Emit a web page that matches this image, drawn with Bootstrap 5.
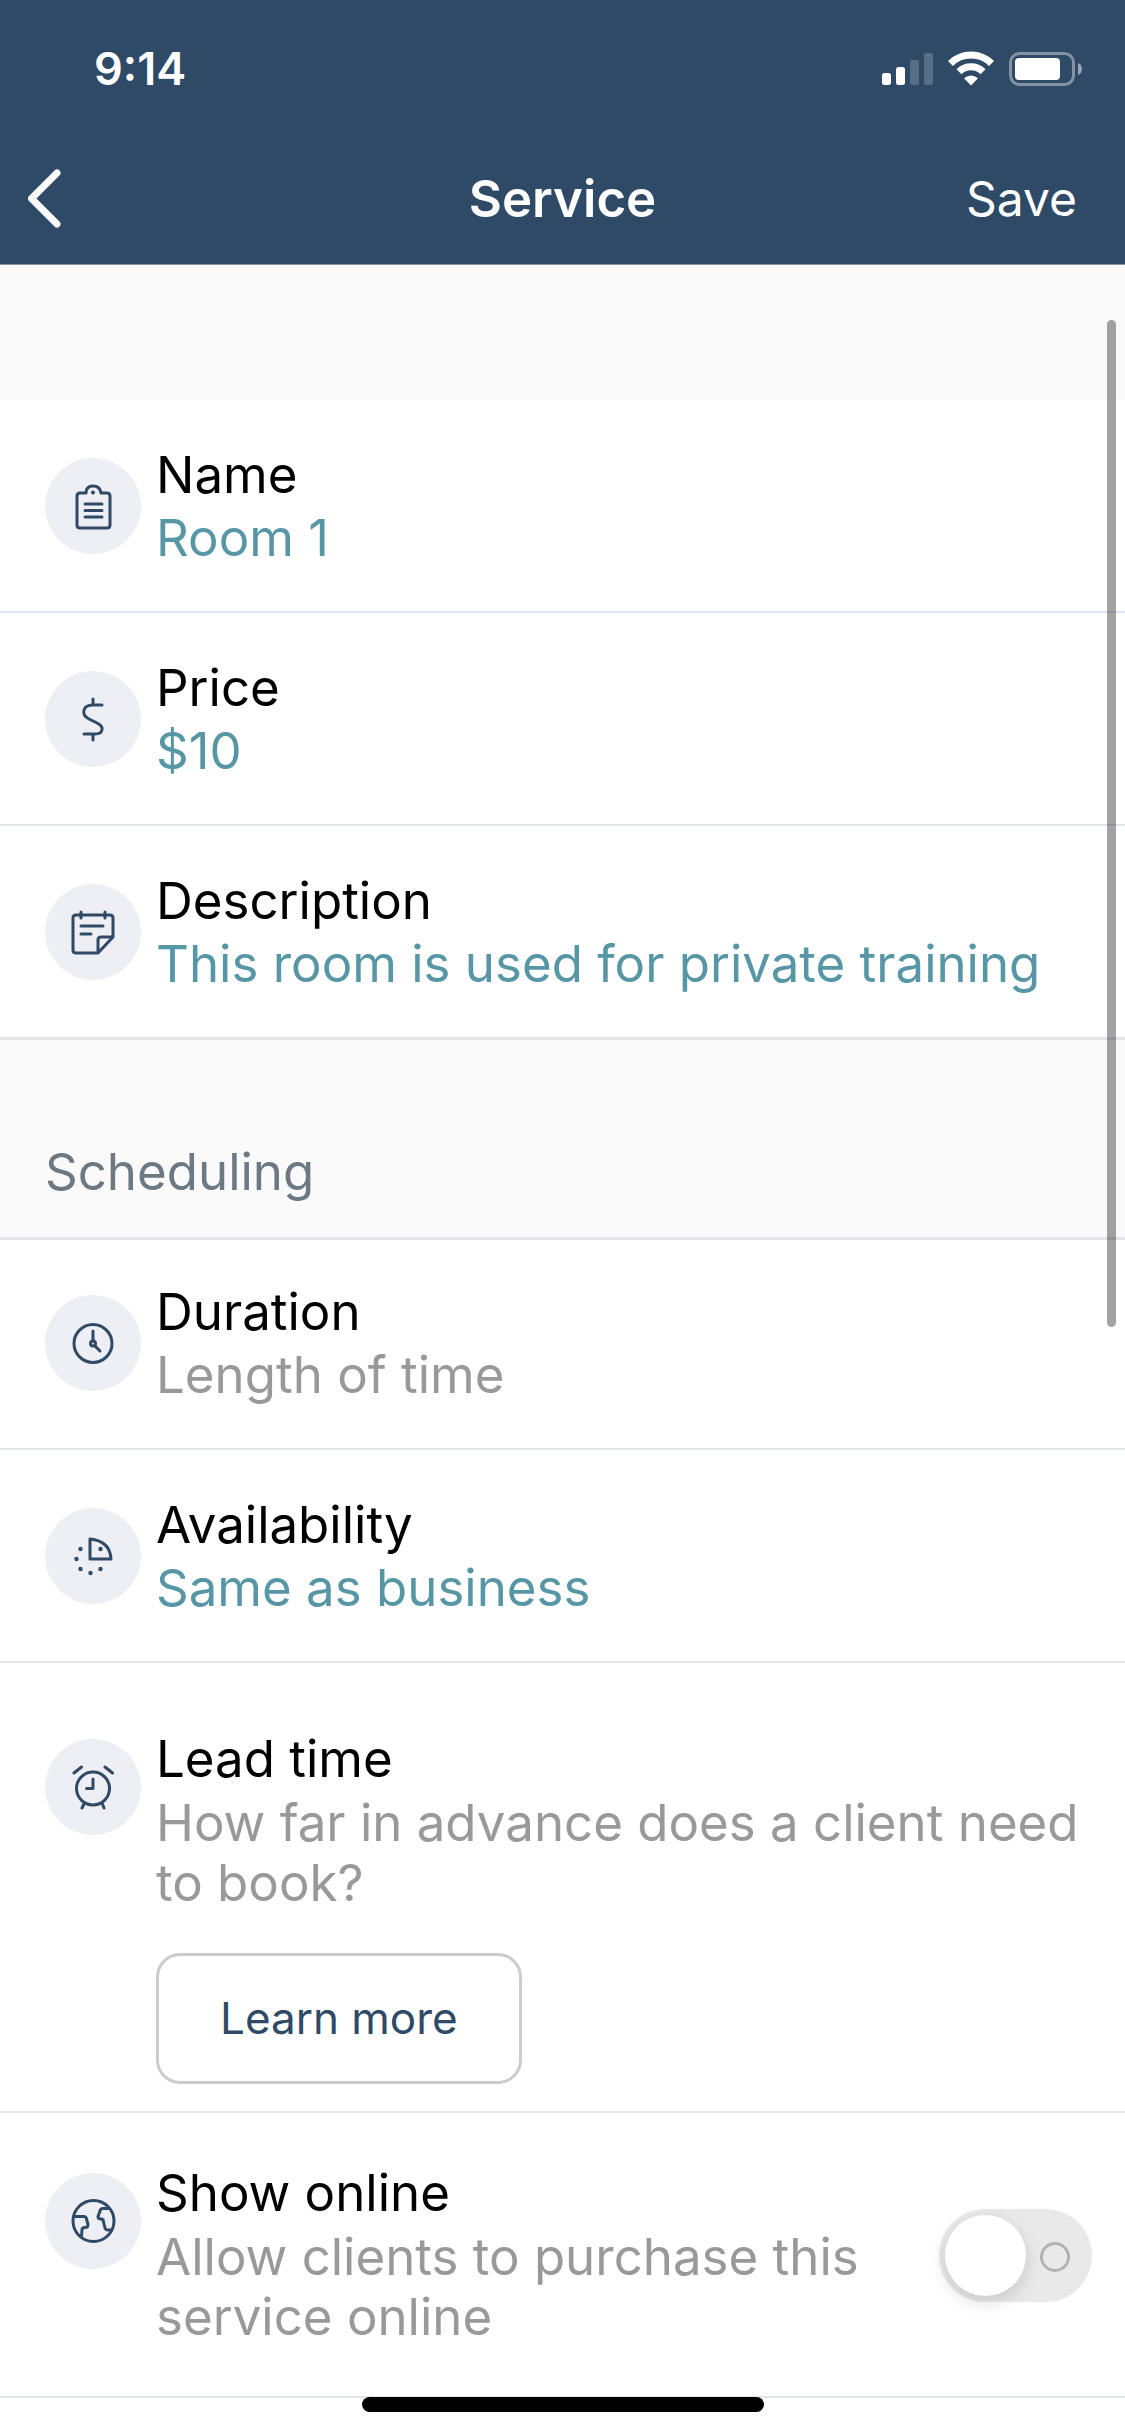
<!DOCTYPE html>
<html lang="en">
<head>
<meta charset="utf-8">
<meta name="viewport" content="width=device-width, initial-scale=1">
<title>Service</title>
<link href="https://cdn.jsdelivr.net/npm/bootstrap@5.3.0/dist/css/bootstrap.min.css" rel="stylesheet">
<script src="https://cdn.jsdelivr.net/npm/bootstrap@5.3.0/dist/js/bootstrap.bundle.min.js" defer></script>
<style>
  :root { --navy: #2e4a67; --teal: #5796a5; --line: #e0e6e9; --hint: #999; }
  body { font-family: Inter, "Liberation Sans", sans-serif; font-size: 51px; line-height: 60px; color: #000; background: #fff; }
  a { color: inherit; text-decoration: none; }
  .app-head { background: var(--navy); color: #fff; border-bottom: 1px solid #8d969f; }
  .status-bar { height: 138px; padding: 0 42px 0 94px; }
  .clock-text { font-size: 45px; font-weight: 600; }
  .title-bar { height: 126px; padding: 0 28px 4px; grid-template-columns: 1fr auto 1fr; }
  .title-text { font-size: 51px; font-weight: 600; line-height: 60px; }
  .save-btn { margin-right: 20px; font-size: 48px; line-height: 60px; }
  .spacer-band { height: 135px; background: #fafafa; }
  .setting { padding: 45px 45px 43px; border-bottom: 2px solid var(--line); gap: 15px; }
  .setting.flush { border-bottom: 0; }
  .setting.capped { box-shadow: inset 0 3px var(--line); }
  .setting.lead-row { padding: 66px 45px 27px; }
  .setting.online-row { padding: 50px 33px 49px 45px; }
  .disc { width: 96px; height: 96px; margin-top: 13px; border-radius: 50%; background: #eeeff4; }
  .disc svg { display: block; width: 96px; height: 96px; fill: none; stroke: var(--navy); stroke-width: 3; stroke-linecap: round; stroke-linejoin: round; }
  .lines { display: flex; flex-direction: column; gap: 3px; }
  .tall .disc { margin-top: 10px; }
  .tall .lines { gap: 4px; }
  .value { color: var(--teal); }
  .hint { color: var(--hint); }
  .group-head { min-height: 200px; padding: 0 45px 35px; color: #6c7983; background: #fafafa; border-top: 3px solid var(--line); font-size: 51px; line-height: 60px; font-weight: 400; }
  .learn-btn { margin-top: 36px; padding: 34px 61px; border: 3px solid #ccc; border-radius: 24px; color: var(--navy); font-size: 44px; line-height: 57px; }
  .toggle { position: relative; width: 153px; height: 93px; margin-top: 46px; }
  .form-check-input.toggle-box { display: block; width: 153px; height: 93px; margin: 0; border: 0; border-radius: 47px; background: #e9e9e9; }
  .toggle-knob { left: 6px; top: 6px; width: 81px; height: 81px; border-radius: 50%; background: #fff; box-shadow: 0 6px 18px rgba(0,0,0,.14); pointer-events: none; }
  .toggle-ring { right: 22px; top: 33px; width: 30px; height: 30px; border: 3px solid #b3b3b3; border-radius: 50%; pointer-events: none; }
  .scroll-thumb { top: 320px; right: 9px; width: 9px; height: 1007px; border-radius: 5px; background: rgba(0,0,0,.36); }
  .home-pill { bottom: 24px; width: 402px; height: 15px; border-radius: 8px; background: #000; }
</style>
</head>
<body class="position-relative min-vh-100 overflow-x-hidden">
<header class="app-head">
  <div class="status-bar d-flex align-items-center justify-content-between">
    <span class="clock-text">9:14</span>
    <svg width="201" height="36" viewBox="0 0 201 36" fill="#fff" aria-hidden="true">
      <rect x="0" y="22" width="9" height="12" rx="2.5"/><rect x="14" y="16" width="9" height="18" rx="2.5"/>
      <g opacity=".2"><rect x="28" y="9" width="9" height="25" rx="2.5"/><rect x="42" y="2" width="9" height="32" rx="2.5"/></g>
      <g fill="none" stroke="#fff" stroke-width="7"><path d="M68.5 12.5A29 29 0 0 1 109.500 12.500"/><path d="M77 20.700A17 17 0 0 1 101 20.700"/></g>
      <path d="M89 34.500L82 27.300Q89 21.500 96 27.300Z"/>
      <rect x="128.500" y="2.500" width="63" height="31" rx="9" fill="none" stroke="#fff" stroke-opacity=".4" stroke-width="3"/>
      <rect x="133" y="7" width="45" height="22" rx="4"/>
      <path d="M196 12v12q4-1.500 4-6t-4-6Z" opacity=".5"/>
    </svg>
  </div>
  <nav class="title-bar d-grid align-items-center" aria-label="Service">
    <a href="#" aria-label="Back"><svg class="d-block" width="36" height="60" viewBox="0 0 36 60" fill="none" stroke="#fafafa" stroke-width="7" stroke-linecap="round" stroke-linejoin="round"><path d="M29 4L3.500 29.500L29 55"/></svg></a>
    <h1 class="title-text m-0">Service</h1>
    <button type="button" class="save-btn btn p-0 border-0 text-white ms-auto">Save</button>
  </nav>
</header>
<main>
  <div class="spacer-band"></div>
  <a href="#" class="setting d-flex align-items-start">
    <span class="disc flex-shrink-0"><svg viewBox="0 0 96 96"><path d="M39 35H35Q32 35 32 38V67Q32 70 35 70H62Q65 70 65 67V38Q65 35 62 35H56Q55 28 48 28T41 35Z"/><path d="M40 46H57M40 52.500H57M40 59H57"/><circle cx="48" cy="34.500" r="1" stroke-width="2"/></svg></span>
    <span class="lines"><span>Name</span><span class="value">Room 1</span></span>
  </a>
  <a href="#" class="setting d-flex align-items-start">
    <span class="disc flex-shrink-0"><svg viewBox="0 0 96 96"><path d="M48 28V34M57 34H48C37 34 36 44 44 48L52 52C60 56 58 63 50 63H39M48 63V69"/></svg></span>
    <span class="lines"><span>Price</span><span class="value">$10</span></span>
  </a>
  <a href="#" class="setting flush d-flex align-items-start">
    <span class="disc flex-shrink-0"><svg viewBox="0 0 96 96"><path d="M53 69H31Q28 69 28 66V34Q28 31 31 31H65Q68 31 68 34V53L53 69V56Q53 53 56 53H68"/><path d="M36 28V34M60 28V34M36 42H58M36 50H46"/></svg></span>
    <span class="lines"><span>Description</span><span class="value">This room is used for private training</span></span>
  </a>
  <h2 class="group-head d-flex align-items-end m-0">Scheduling</h2>
  <a href="#" class="setting capped d-flex align-items-start">
    <span class="disc flex-shrink-0"><svg viewBox="0 0 96 96"><circle cx="48" cy="48.500" r="19"/><path d="M48 36V46M50 51L55 56"/><circle cx="48" cy="48.500" r="2.500"/></svg></span>
    <span class="lines"><span>Duration</span><span class="hint">Length of time</span></span>
  </a>
  <a href="#" class="setting d-flex align-items-start">
    <span class="disc flex-shrink-0"><svg viewBox="0 0 96 96"><path d="M45 31V51H66Q65 33 45 31Z"/><g stroke-width="2"><circle cx="35.500" cy="41" r="1.200"/><circle cx="55.500" cy="41" r="1.200"/><circle cx="31.500" cy="51" r="1.200"/><circle cx="35.500" cy="61" r="1.200"/><circle cx="45.500" cy="65" r="1.200"/><circle cx="55.500" cy="61" r="1.200"/></g></svg></span>
    <span class="lines"><span>Availability</span><span class="value">Same as business</span></span>
  </a>
  <section class="setting lead-row tall d-flex align-items-start">
    <span class="disc flex-shrink-0"><svg viewBox="0 0 96 96"><circle cx="48" cy="49.500" r="16.500"/><path d="M48 40V49.500H41.500M29 34L36.500 28M67.500 34L60 28M39.500 64L37 69M57 64L59 69"/></svg></span>
    <div class="lines align-items-start"><span>Lead time</span><span class="hint">How far in advance does a client need to book?</span>
      <button type="button" class="learn-btn btn">Learn more</button></div>
  </section>
  <section class="setting online-row tall d-flex align-items-start">
    <span class="disc flex-shrink-0"><svg viewBox="0 0 96 96"><circle cx="48.500" cy="48" r="20.500"/><path d="M29 43.500H39Q41 43.500 41.500 46L43 51.500Q43 54.500 40 54.500Q37 54.500 37 57L36.500 63M64 35.500H58Q55.500 35.500 55 38L53 43.500Q53 46 56 46Q58.500 46 58.500 49L60 55Q60.500 57 63 57H66"/></svg></span>
    <label class="lines flex-grow-1" for="online"><span>Show online</span><span class="hint">Allow clients to purchase this service online</span></label>
    <div class="toggle flex-shrink-0">
      <input class="form-check-input toggle-box" type="checkbox" role="switch" id="online">
      <span class="toggle-knob position-absolute"></span><span class="toggle-ring position-absolute"></span>
    </div>
  </section>
</main>
<div class="scroll-thumb position-absolute"></div>
<div class="home-pill position-absolute start-50 translate-middle-x"></div>
</body>
</html>
